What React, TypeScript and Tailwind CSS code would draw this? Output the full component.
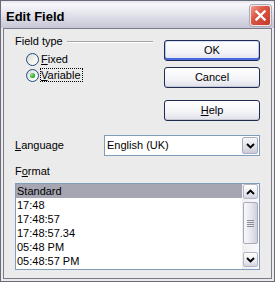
import React from "react";

function Chevron({ up = false }: { up?: boolean }) {
  return (
    <svg width="9" height="6" viewBox="0 0 9 6">
      <path
        d={up ? "M1 5 L4.5 1.5 L8 5" : "M1 1 L4.5 4.5 L8 1"}
        fill="none"
        stroke="#000"
        strokeWidth="1.9"
      />
    </svg>
  );
}

function Radio({ checked }: { checked?: boolean }) {
  return (
    <div className="mt-[1px] w-[13px] h-[13px] shrink-0 rounded-full border border-[#1c4b7c] bg-[linear-gradient(135deg,#d8d8d2,#f4f4f2_60%,#ffffff)] flex items-center justify-center">
      {checked && (
        <div className="w-[5px] h-[5px] rounded-full bg-[radial-gradient(circle_at_35%_35%,#9ae89a,#22a622_60%,#178a17)]" />
      )}
    </div>
  );
}

function Btn({ children, def }: { children: React.ReactNode; def?: boolean }) {
  return (
    <div
      className={
        def
          ? "h-[21px] w-[96px] rounded-[3px] border border-[#1f2c52] flex items-center justify-center bg-[linear-gradient(to_bottom,#ffffff,#f4f4f8_55%,#e2e2ec)] shadow-[inset_0_-2px_0_#4866e0,inset_1px_0_0_#b6c6f2,inset_-1px_0_0_#b6c6f2,inset_0_1px_0_#d6e0fa]"
          : "h-[21px] w-[96px] rounded-[3px] border border-[#1f2c52] flex items-center justify-center bg-[linear-gradient(to_bottom,#ffffff,#f4f4f8_55%,#e0e0ea)] shadow-[inset_0_-1px_0_#c8c8d6]"
      }
    >
      {children}
    </div>
  );
}

const rows = ["Standard", "17:48", "17:48:57", "17:48:57.34", "05:48 PM", "05:48:57 PM"];

export default function App() {
  return (
    <div className="w-[275px] h-[282px] bg-[#ebebeb] border border-[#6a6a7a] flex flex-col font-['Liberation_Sans',Arial,sans-serif] text-[11px] leading-[13px] text-black select-none overflow-hidden">
      {/* Title bar */}
      <div className="h-[27px] shrink-0 flex items-start justify-between pl-[5px] pr-[3px] bg-[linear-gradient(to_bottom,#e4e4ec_0%,#f8f8fb_12%,#e8e8f0_40%,#d2d2de_80%,#c6c6d6_100%)]">
        <span className="mt-[8px] text-[13px] leading-[15px] font-bold">Edit Field</span>
        <div className="mt-[4px] w-[21px] h-[21px] rounded-[3px] border border-[#f4e6e4] bg-[linear-gradient(135deg,#f09a8c_0%,#dc5644_40%,#c33a2a_100%)] shadow-[0_0_0_1px_#a9a9b8] flex items-center justify-center">
          <svg width="11" height="11" viewBox="0 0 11 11">
            <path d="M1.5 1.5 L9.5 9.5 M9.5 1.5 L1.5 9.5" stroke="#ffffff" strokeWidth="2.3" strokeLinecap="square" />
          </svg>
        </div>
      </div>

      {/* Body */}
      <div className="flex-1 mx-[2px] mb-[2px] border border-[#7c7c88] flex flex-col pl-[11px] pr-[11px]">
        {/* Top section */}
        <div className="flex flex-row justify-between">
          <div className="w-[138px] pt-[6px] flex flex-col">
            <div className="h-[13px] flex items-center">
              <span>Field type</span>
              <div className="flex-1 ml-[4px] h-[2px] border-t border-t-[#a4a4a8] border-b border-b-[#ffffff]" />
            </div>
            <div className="mt-[4px] pl-[11px] flex flex-col">
              <div className="h-[16px] flex items-start">
                <Radio />
                <span className="ml-[1px] h-[14px] leading-[12px] border border-transparent pr-[1px]">
                  <u className="underline-offset-[1px]">F</u>ixed
                </span>
              </div>
              <div className="h-[16px] flex items-start">
                <Radio checked />
                <span className="ml-[1px] h-[14px] leading-[12px] border border-dotted border-black pr-[1px]">
                  <u className="underline-offset-[1px]">V</u>ariable
                </span>
              </div>
            </div>
          </div>
          <div className="pt-[11px] flex flex-col">
            <Btn def>OK</Btn>
            <div className="mt-[6px]">
              <Btn>Cancel</Btn>
            </div>
            <div className="mt-[12px]">
              <Btn>
                <span>
                  <u className="underline-offset-[1px]">H</u>elp
                </span>
              </Btn>
            </div>
          </div>
        </div>

        {/* Language */}
        <div className="mt-[14px] h-[21px] flex items-center justify-between">
          <span>
            <u className="underline-offset-[1px]">L</u>anguage
          </span>
          <div className="w-[156px] h-[21px] border border-[#7f9db9] bg-white flex items-center justify-between pl-[1px] pr-[1px]">
            <span className="pl-[1px]">English (UK)</span>
            <div className="w-[16px] h-[17px] rounded-[2px] border border-[#a8acc0] bg-[linear-gradient(to_bottom,#f6f6fa,#dcdce6_70%,#cacad8)] flex items-center justify-center">
              <Chevron />
            </div>
          </div>
        </div>

        {/* Format */}
        <div className="mt-[9px] h-[13px]">
          F<u className="underline-offset-[1px]">o</u>rmat
        </div>
        <div className="mt-[5px] h-[87px] border border-[#7f9db9] bg-white flex flex-row">
          <div className="flex-1 flex flex-col">
            {rows.map((r, i) => (
              <div
                key={r}
                className={
                  i === 0
                    ? "h-[14px] leading-[14px] pl-[1px] bg-[#a6a6b2]"
                    : "h-[14px] leading-[14px] pl-[1px]"
                }
              >
                {r}
              </div>
            ))}
          </div>
          <div className="w-[17px] bg-[linear-gradient(to_right,#eeeef2,#fbfbfc)] flex flex-col px-[1px] pb-[2px]">
            <div className="h-[15px] rounded-[2px] border border-[#b4b6c6] bg-[linear-gradient(to_bottom,#ffffff,#e6e6ee_70%,#d4d4e0)] flex items-center justify-center">
              <Chevron up />
            </div>
            <div className="mt-[3px] h-[42px] rounded-[2px] border border-[#a8aabc] bg-[linear-gradient(to_right,#f8f8fb,#e4e4ec_60%,#d0d0dc)] flex flex-col items-center justify-center gap-[1px]">
              <div className="w-[7px] h-px bg-[#8c8c9c]" />
              <div className="w-[7px] h-px bg-[#8c8c9c]" />
              <div className="w-[7px] h-px bg-[#8c8c9c]" />
              <div className="w-[7px] h-px bg-[#8c8c9c]" />
            </div>
            <div className="mt-auto h-[15px] rounded-[2px] border border-[#b4b6c6] bg-[linear-gradient(to_bottom,#ffffff,#e6e6ee_70%,#d4d4e0)] flex items-center justify-center">
              <Chevron />
            </div>
          </div>
        </div>
      </div>
    </div>
  );
}
